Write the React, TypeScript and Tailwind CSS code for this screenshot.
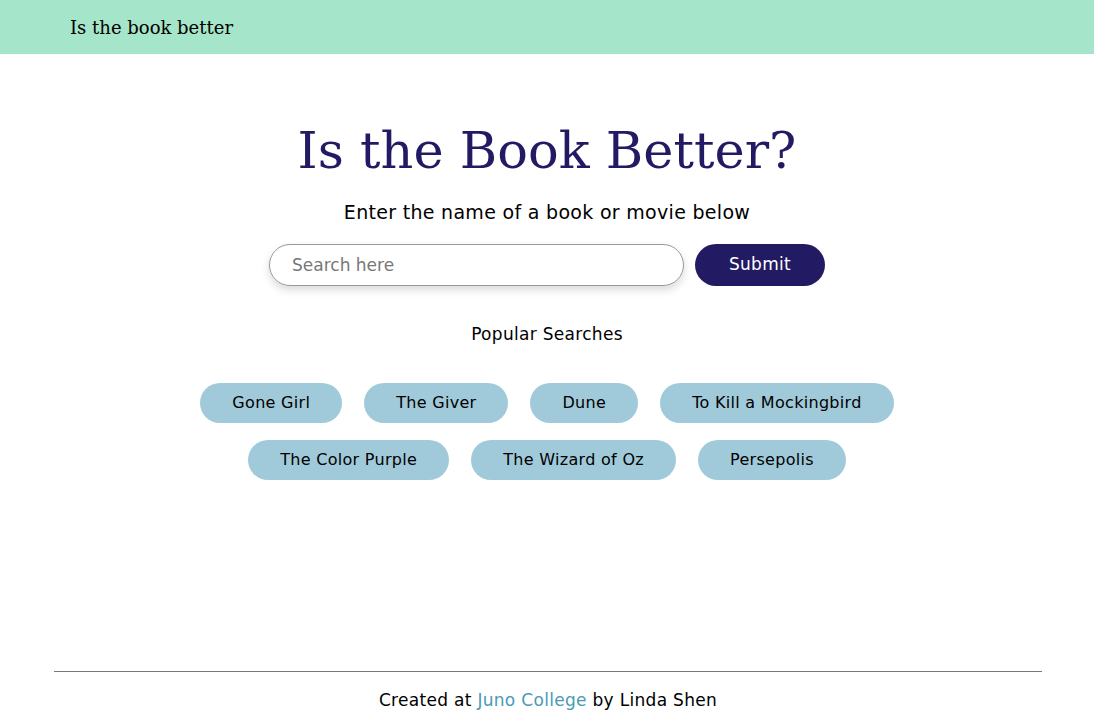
const popular = [
  "Gone Girl",
  "The Giver",
  "Dune",
  "To Kill a Mockingbird",
  "The Color Purple",
  "The Wizard of Oz",
  "Persepolis",
];

const sans = "font-['DejaVu_Sans',sans-serif]";

export default function App() {
  return (
    <div className={`min-h-[724px] flex flex-col bg-white text-black ${sans}`}>
      <header className="h-[54px] bg-[#a5e5c9] flex items-center px-[70px]">
        <span className="font-['DejaVu_Serif',serif] text-[18px] text-black">Is the book better</span>
      </header>

      <main className="flex-1 flex flex-col items-center pt-[61px]">
        <h1 className="font-['DejaVu_Serif',serif] text-[51px] leading-[72px] text-[#221a63]">
          Is the Book Better?
        </h1>
        <p className="mt-[13px] text-[19px] tracking-[0.3px] leading-[24px]">Enter the name of a book or movie below</p>

        <form className="mt-[20px] flex items-center gap-[11px]" onSubmit={(e) => e.preventDefault()}>
          <input
            type="text"
            placeholder="Search here"
            className="w-[415px] h-[42px] rounded-full border border-[#999] px-[22px] text-[17px] placeholder:text-[#777] shadow-[0_4px_8px_rgba(0,0,0,0.15)] outline-none"
          />
          <button className="w-[130px] h-[42px] rounded-full bg-[#221a63] text-white text-[17px] tracking-[0.3px]">
            Submit
          </button>
        </form>

        <p className="mt-[36px] text-[17px] tracking-[0.3px] leading-[24px]">Popular Searches</p>

        <div className="mt-[37px] flex flex-wrap justify-center gap-x-[22px] gap-y-[17px] max-w-[760px]">
          {popular.map((title) => (
            <button
              key={title}
              className="h-[40px] px-[32px] rounded-full bg-[#a0cad9] text-[16px] tracking-[0.3px] text-black"
            >
              {title}
            </button>
          ))}
        </div>
      </main>

      <footer className="ml-[54px] mr-[52px] border-t border-[#777] h-[53px] pt-[5px] flex items-center justify-center text-[17px] tracking-[0.3px]">
        <p>
          Created at <a href="#" className="text-[#4a9ab5]">Juno College</a> by Linda Shen
        </p>
      </footer>
    </div>
  );
}
